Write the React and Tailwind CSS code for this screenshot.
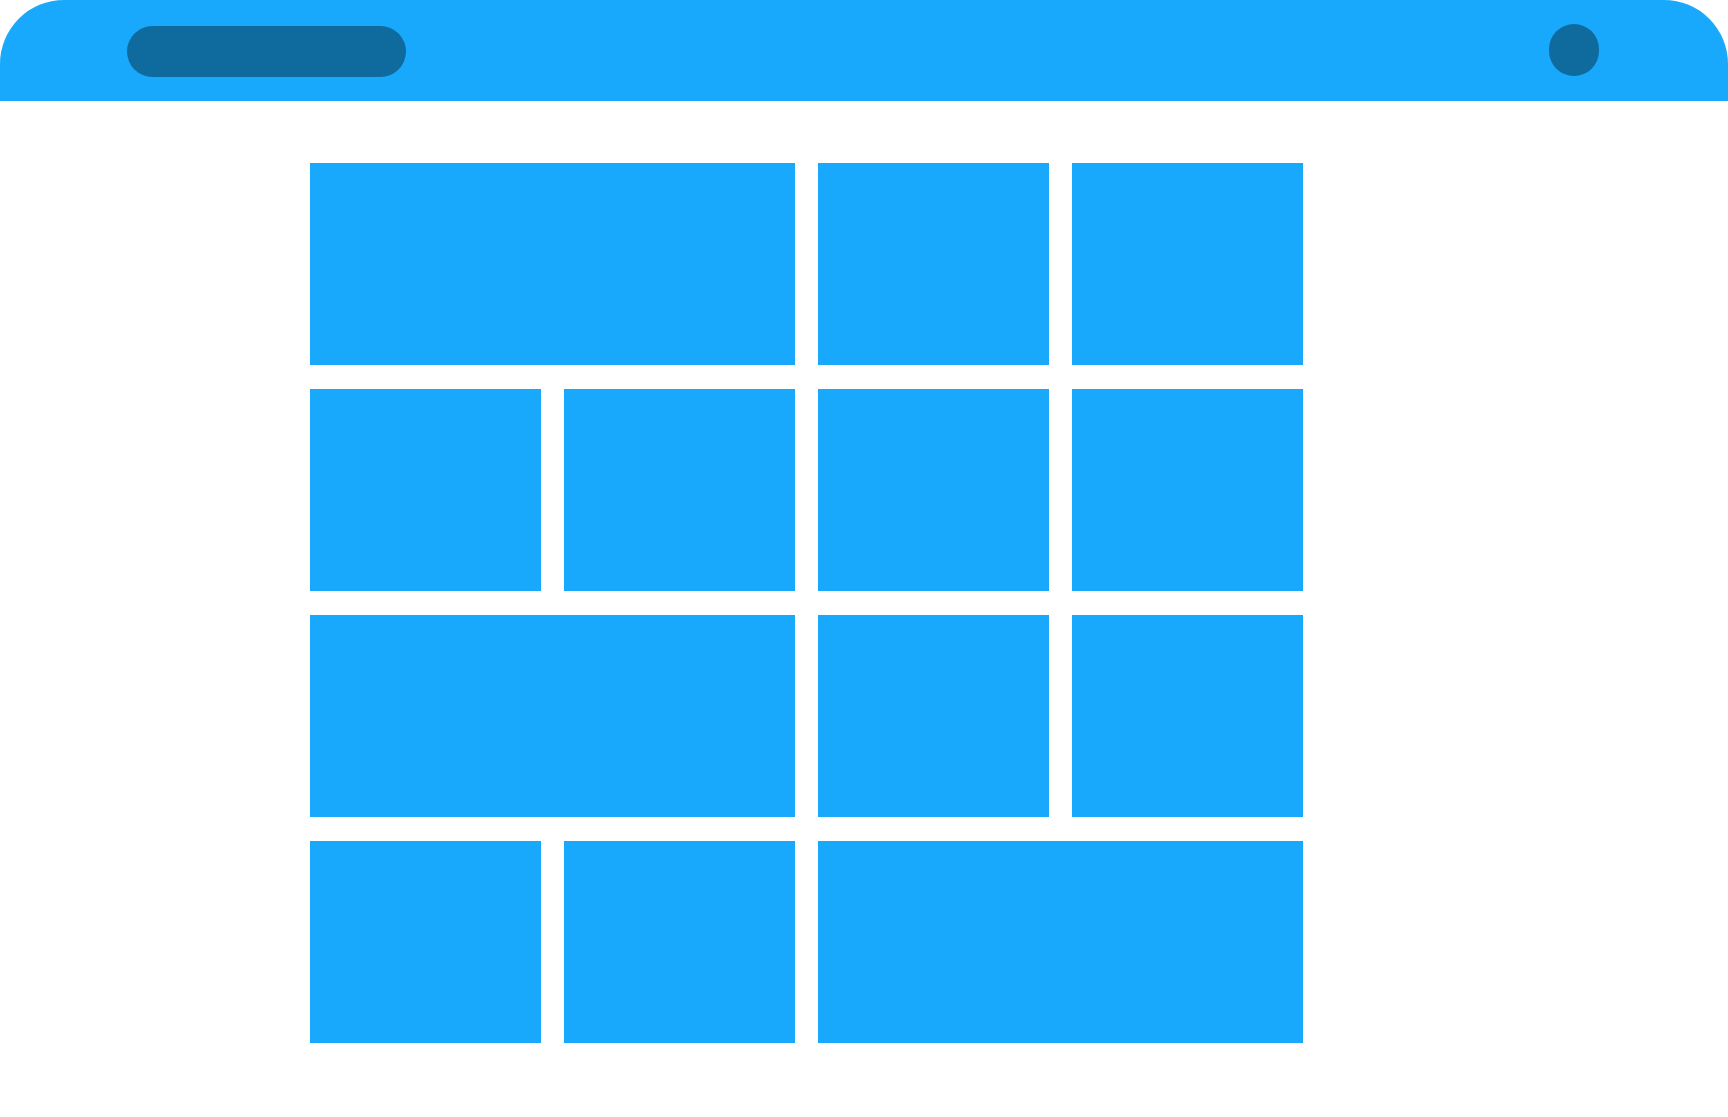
export default function App() {
  const tiles = [2, 1, 1, 1, 1, 1, 1, 2, 1, 1, 1, 1, 2]

  return (
    <div className="min-h-[1117px] w-full bg-white">
      {/* top bar */}
      <header className="flex h-[101px] items-start justify-between rounded-t-[64px] bg-[#18a9fd] pl-[127px] pr-[129px]">
        <div className="mt-[26px] h-[51px] w-[279px] rounded-full bg-[#0f6a9e]" />
        <div className="mt-[24px] h-[52px] w-[50px] rounded-full bg-[#0f6a9e]" />
      </header>

      {/* tile grid */}
      <main className="ml-[310px] mt-[62px] grid w-[993px] grid-cols-[repeat(4,231px)] auto-rows-[202px] gap-x-[23px] gap-y-[24px]">
        {tiles.map((span, i) => (
          <div
            key={i}
            className={span === 2 ? 'col-span-2 bg-[#18a9fd]' : 'bg-[#18a9fd]'}
          />
        ))}
      </main>
    </div>
  )
}
